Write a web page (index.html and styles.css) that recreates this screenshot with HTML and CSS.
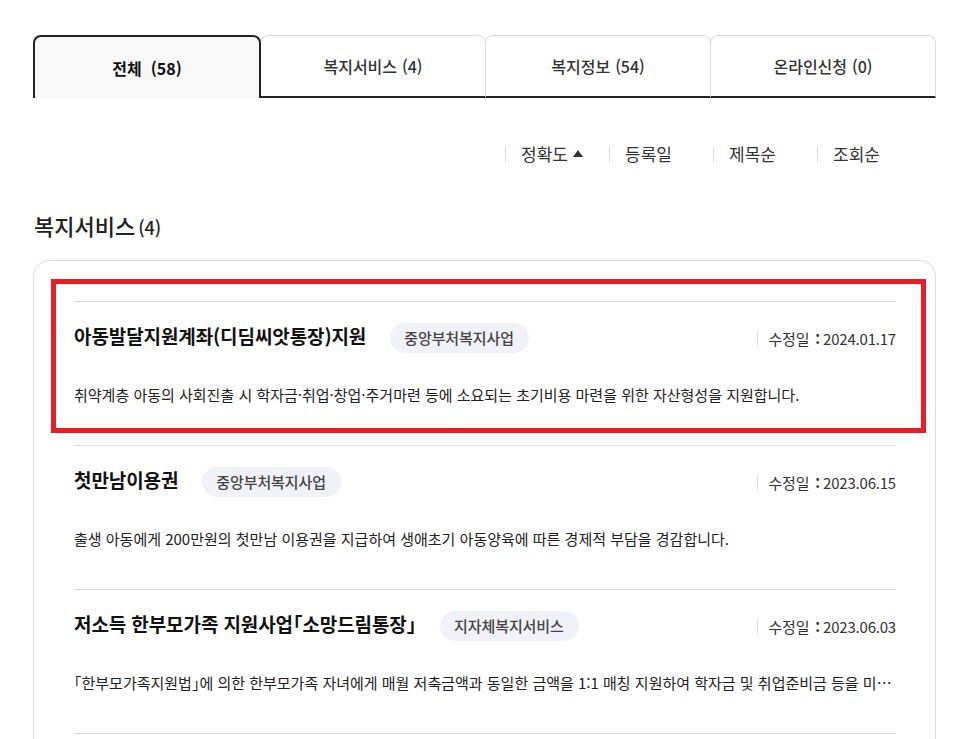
FILE: index.html
```html
<!DOCTYPE html>
<html lang="ko">
<head>
    <meta charset="UTF-8">
    <meta name="viewport" content="width=device-width, initial-scale=1.0">
    <title>복지서비스 검색결과</title>
    <link rel="stylesheet" href="styles.css">
</head>
<body>
    <div class="wrap">
        <ul class="tabs">
            <li class="tab active">전체 <span class="count">(58)</span></li>
            <li class="tab">복지서비스 <span class="count">(4)</span></li>
            <li class="tab">복지정보 <span class="count">(54)</span></li>
            <li class="tab">온라인신청 <span class="count">(0)</span></li>
        </ul>

        <ul class="sort">
            <li class="sort-item on">정확도<span class="arrow"></span></li>
            <li class="sort-item">등록일</li>
            <li class="sort-item">제목순</li>
            <li class="sort-item">조회순</li>
        </ul>

        <h2 class="section-title">복지서비스<span class="section-count">(4)</span></h2>

        <div class="card">
            <div class="highlight"></div>
            <ul class="result-list">
                <li class="result">
                    <div class="result-head">
                        <strong class="result-title">아동발달지원계좌(디딤씨앗통장)지원</strong>
                        <span class="badge">중앙부처복지사업</span>
                        <span class="date">수정일 <em>:</em>2024.01.17</span>
                    </div>
                    <p class="result-desc">취약계층 아동의 사회진출 시 학자금·취업·창업·주거마련 등에 소요되는 초기비용 마련을 위한 자산형성을 지원합니다.</p>
                </li>
                <li class="result">
                    <div class="result-head">
                        <strong class="result-title">첫만남이용권</strong>
                        <span class="badge">중앙부처복지사업</span>
                        <span class="date">수정일 <em>:</em>2023.06.15</span>
                    </div>
                    <p class="result-desc">출생 아동에게 200만원의 첫만남 이용권을 지급하여 생애초기 아동양육에 따른 경제적 부담을 경감합니다.</p>
                </li>
                <li class="result">
                    <div class="result-head">
                        <strong class="result-title">저소득 한부모가족 지원사업「소망드림통장」</strong>
                        <span class="badge">지자체복지서비스</span>
                        <span class="date">수정일 <em>:</em>2023.06.03</span>
                    </div>
                    <p class="result-desc">「한부모가족지원법」에 의한 한부모가족 자녀에게 매월 저축금액과 동일한 금액을 1:1 매칭 지원하여 학자금 및 취업준비금 등을 미리 마련할 수 있도록 지원합니다.</p>
                </li>
                <li class="result">
                    <div class="result-head">
                        <strong class="result-title">아이돌봄 지원사업</strong>
                        <span class="badge">중앙부처복지사업</span>
                        <span class="date">수정일 <em>:</em>2023.05.30</span>
                    </div>
                    <p class="result-desc">맞벌이 가정 등에 아이돌보미가 찾아가 아이를 안전하게 돌봐줍니다.</p>
                </li>
            </ul>
        </div>
    </div>
</body>
</html>
```

FILE: styles.css
```css
* {
    box-sizing: border-box;
}

body {
    margin: 0;
    font-family: "Noto Sans CJK KR", "Noto Sans", sans-serif;
    color: #222;
    background-color: #fff;
}

ul {
    list-style: none;
    margin: 0;
    padding: 0;
}

.wrap {
    width: 903px;
    margin-left: 33px;
    padding-top: 35px;
}

/* tabs */
.tabs {
    display: flex;
}

.tab {
    flex: 1;
    height: 63px;
    display: flex;
    align-items: center;
    justify-content: center;
    font-size: 16px;
    font-weight: 500;
    color: #333;
    border: 1px solid #ddd;
    border-bottom: 2px solid #222;
    border-radius: 8px 8px 0 0;
    background-color: #fff;
}

.tab + .tab {
    margin-left: -1px;
}

.tab .count {
    margin-left: 5px;
}

.tab.active {
    border: 2px solid #222;
    border-bottom: none;
    background-color: #f8f8f8;
    color: #111;
    font-weight: 700;
    position: relative;
    z-index: 1;
}

.tab.active .count {
    margin-left: 9px;
}

/* sort */
.sort {
    display: flex;
    justify-content: flex-end;
    margin-top: 44px;
    padding-right: 15px;
}

.sort-item {
    width: 104px;
    display: flex;
    align-items: center;
    font-size: 17px;
    line-height: 24px;
    color: #333;
}

.sort-item::before {
    content: "";
    display: inline-block;
    width: 1px;
    height: 15px;
    background-color: #ddd;
    margin-right: 15px;
}

.arrow {
    display: inline-block;
    margin-left: 5px;
    width: 0;
    height: 0;
    border-left: 5px solid transparent;
    border-right: 5px solid transparent;
    border-bottom: 7px solid #333;
    margin-bottom: 2px;
}

/* section */
.section-title {
    margin: 44px 0 0 1px;
    font-size: 22px;
    font-weight: 500;
    line-height: 30px;
    color: #222;
}

.section-count {
    font-size: 18px;
    margin-left: 3px;
}

.card {
    position: relative;
    margin-top: 18px;
    border: 1px solid #ddd;
    border-radius: 16px;
    padding: 40px 39px 0 40px;
    height: 520px;
}

.highlight {
    position: absolute;
    left: 17px;
    top: 18px;
    width: 875px;
    height: 154px;
    border: 5px solid #ed1c24;
}

.result {
    border-top: 1px solid #ddd;
    padding: 21px 0 38px;
}

.result-head {
    display: flex;
    align-items: center;
    height: 30px;
}

.result-title {
    font-size: 19px;
    font-weight: 700;
    letter-spacing: -0.1px;
    color: #111;
    margin-top: -5px;
    font-feature-settings: "halt";
}

.badge {
    margin-left: 24px;
    height: 30px;
    padding: 0 15px 0 14px;
    border-radius: 15px;
    background-color: #f1f1f9;
    font-size: 15px;
    font-weight: 500;
    letter-spacing: -0.1px;
    line-height: 30px;
    color: #444;
}

.date {
    margin-left: auto;
    display: flex;
    align-items: center;
    font-size: 15px;
    letter-spacing: -0.2px;
    color: #333;
}

.date::before {
    content: "";
    display: inline-block;
    width: 1px;
    height: 15px;
    background-color: #ddd;
    margin-right: 11px;
}

.date em {
    font-style: normal;
    font-weight: 700;
    margin: 0 3px 0 6px;
}

.result-desc {
    margin: 30px 0 0;
    font-size: 15px;
    line-height: 24px;
    letter-spacing: 0;
    color: #222;
    white-space: nowrap;
    overflow: hidden;
    text-overflow: ellipsis;
    font-feature-settings: "halt";
}
```
